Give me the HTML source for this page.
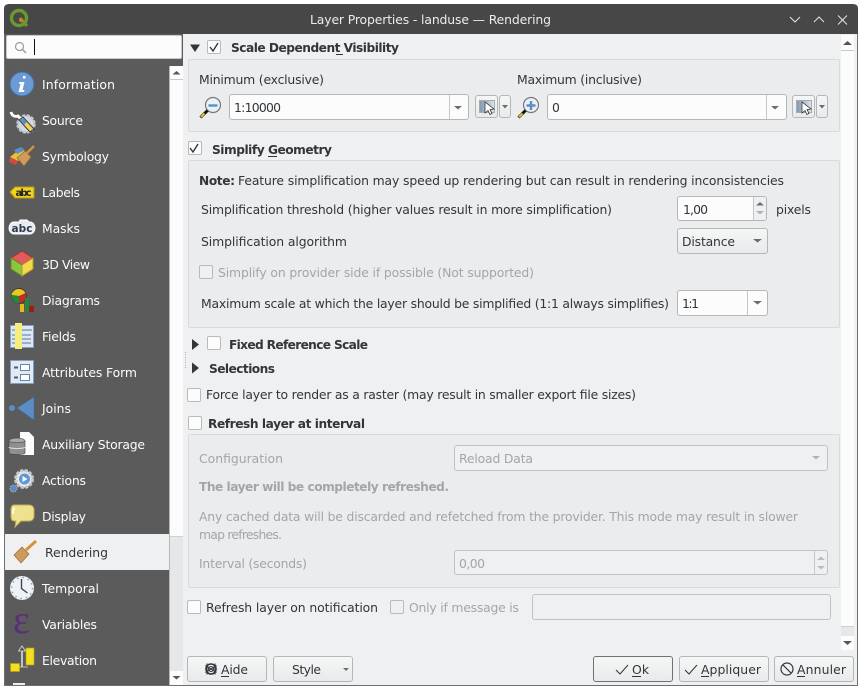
<!DOCTYPE html>
<html><head><meta charset="utf-8"><title>Layer Properties</title>
<style>
html,body{margin:0;padding:0;width:862px;height:698px;overflow:hidden;background:#fff}
#w{position:absolute;left:0;top:0;width:862px;height:698px;overflow:hidden}
.b{position:absolute;box-sizing:border-box}
.grp{background:#ebecee;border:1px solid #d9dadc;border-radius:2px}
.inp{background:#fcfcfc;border:1px solid #b4b6b8;border-radius:3px}
.btn{background:linear-gradient(#f5f6f6,#e9eaeb);border:1px solid #b4b6b8;border-radius:3px}
.chk{background:#fcfcfc;border:1px solid #b8babc;border-radius:2px;width:14px;height:14px}
.dis{background:#eff0f1;border:1px solid #c0c2c4;border-radius:3px}
svg{position:absolute;left:0;top:0}
text{font-family:"DejaVu Sans","Liberation Sans",sans-serif;font-size:12.4px;fill:#31363b}
.s text,text.s{fill:#fcfcfc}
.bd{font-weight:bold;font-size:12.2px}
.d{fill:#a3a5a7}
</style></head><body><div id="w">
<!-- window -->
<div class="b" style="left:4px;top:4px;width:854px;height:682px;background:#eff0f1;border:1px solid #6e6f70;border-top:0;border-radius:4px 4px 0 0"></div>
<div class="b" style="left:4px;top:4px;width:854px;height:30px;background:#474747;border-radius:5px 5px 0 0"></div>
<!-- sidebar -->
<div class="b" style="left:5px;top:34px;width:178px;height:32px;background:#5b5b5b"></div>
<div class="b" style="left:5px;top:66px;width:164px;height:619px;background:#5b5b5b"></div>
<div class="b" style="left:169px;top:66px;width:1px;height:619px;background:#b5b6b7"></div>
<div class="b" style="left:6px;top:35px;width:176px;height:24px;background:#fcfcfc;border:1px solid #c8c9ca;border-radius:2px"></div>
<div class="b" style="left:34px;top:39px;width:1px;height:16px;background:#111"></div>
<div class="b" style="left:170px;top:66px;width:13px;height:470px;background:#fcfcfc"></div>
<div class="b" style="left:170px;top:79px;width:13px;height:1px;background:#c8c9ca"></div>
<div class="b" style="left:170px;top:536px;width:13px;height:135px;background:#e6e7e8;border-top:1px solid #cfd0d1"></div>
<div class="b" style="left:170px;top:671px;width:13px;height:14px;background:#fcfcfc"></div>
<div class="b" style="left:5px;top:534px;width:164px;height:36px;background:#eff0f1"></div>
<!-- main scrollbar -->
<div class="b" style="left:841px;top:35px;width:13px;height:591px;background:#fcfcfc"></div>
<div class="b" style="left:841px;top:50px;width:13px;height:1px;background:#c8c9ca"></div>
<div class="b" style="left:841px;top:626px;width:13px;height:10px;background:#e6e7e8;border-top:1px solid #cfd0d1"></div>
<div class="b" style="left:841px;top:636px;width:13px;height:14px;background:#fcfcfc"></div>
<!-- groups -->
<div class="b grp" style="left:188px;top:59px;width:652px;height:73px"></div>
<div class="b grp" style="left:188px;top:160px;width:652px;height:168px"></div>
<div class="b grp" style="left:188px;top:434px;width:652px;height:154px"></div>
<!-- scale row -->
<div class="b inp" style="left:229px;top:94px;width:240px;height:26px"></div>
<div class="b" style="left:449px;top:95px;width:1px;height:24px;background:#c4c6c8"></div>
<div class="b btn" style="left:475px;top:95px;width:23px;height:23px"></div>
<div class="b btn" style="left:499px;top:95px;width:12px;height:23px"></div>
<div class="b inp" style="left:547px;top:94px;width:240px;height:26px"></div>
<div class="b" style="left:766px;top:95px;width:1px;height:24px;background:#c4c6c8"></div>
<div class="b btn" style="left:792px;top:95px;width:23px;height:23px"></div>
<div class="b btn" style="left:816px;top:95px;width:12px;height:23px"></div>
<!-- simplify controls -->
<div class="b inp" style="left:677px;top:196px;width:90px;height:25px"></div>
<div class="b" style="left:753px;top:197px;width:13px;height:23px;background:#eff0f1;border-left:1px solid #c4c6c8;box-sizing:border-box;border-radius:0 2px 2px 0"></div>
<div class="b btn" style="left:677px;top:228px;width:91px;height:26px"></div>
<div class="b inp" style="left:677px;top:290px;width:91px;height:26px"></div>
<div class="b" style="left:747px;top:291px;width:1px;height:24px;background:#c4c6c8"></div>
<!-- refresh controls -->
<div class="b dis" style="left:454px;top:445px;width:374px;height:26px"></div>
<div class="b dis" style="left:454px;top:550px;width:374px;height:25px"></div>
<div class="b" style="left:814px;top:551px;width:1px;height:23px;background:#c4c6c8"></div>
<div class="b dis" style="left:532px;top:594px;width:299px;height:26px"></div>
<!-- checkboxes -->
<div class="b chk" style="left:207px;top:40px"></div>
<div class="b chk" style="left:188px;top:141px"></div>
<div class="b chk" style="left:207px;top:336px"></div>
<div class="b chk" style="left:187px;top:388px"></div>
<div class="b chk" style="left:188px;top:416px"></div>
<div class="b chk" style="left:187px;top:600px"></div>
<div class="b chk" style="left:390px;top:600px;background:#eff0f1"></div>
<div class="b chk" style="left:199px;top:265px;background:#eff0f1"></div>
<!-- buttons -->
<div class="b btn" style="left:187px;top:656px;width:80px;height:26px"></div>
<div class="b btn" style="left:273px;top:656px;width:80px;height:26px"></div>
<div class="b btn" style="left:593px;top:656px;width:80px;height:26px;border-color:#6f7173"></div>
<div class="b btn" style="left:679px;top:656px;width:90px;height:26px"></div>
<div class="b btn" style="left:774px;top:656px;width:80px;height:26px"></div>

<svg width="862" height="698" viewBox="0 0 862 698" xmlns="http://www.w3.org/2000/svg">
<defs><linearGradient id="cv" x1="0" x2="1" y1="0" y2="0"><stop offset="0" stop-color="#8298ae"/><stop offset="1" stop-color="#dfe3e8"/></linearGradient></defs>
<!-- qgis logo -->
<circle cx="19" cy="18" r="7.500" fill="none" stroke="#6b9a2c" stroke-width="3.400"/>
<path d="M20 18l7 8" stroke="#6b9a2c" stroke-width="3.200"/><circle cx="21" cy="20" r="2" fill="#e0752a"/>
<text class="s" x="310" y="24" textLength="241" lengthAdjust="spacing" style="fill:#ececec">Layer Properties - landuse — Rendering</text>
<path d="M790 17l5 5 5-5M814 22l5-5 5 5M838 15.500l9 9M847 15.500l-9 9" fill="none" stroke="#e6e6e6" stroke-width="1"/>
<!-- search -->
<circle cx="19.500" cy="46.500" r="4" fill="none" stroke="#9a9a9a" stroke-width="1.200"/><path d="M22.500 49.500l3.500 3.500" stroke="#9a9a9a" stroke-width="1.500"/>
<!-- scroll arrows -->
<path d="M172.500 74.500l4-3.500 4 3.500z M172.500 676l4 3.500 4-3.500z M843 45l4.500-4 4.500 4z M843 641l4.500 4 4.500-4z" fill="#555"/>

<!-- sidebar labels -->
<g class="s">
<text x="42" y="89" textLength="73">Information</text>
<text x="42" y="125" textLength="41">Source</text>
<text x="42" y="161" textLength="67">Symbology</text>
<text x="42" y="197" textLength="38">Labels</text>
<text x="42" y="233" textLength="38">Masks</text>
<text x="42" y="269" textLength="48">3D View</text>
<text x="42" y="305" textLength="58">Diagrams</text>
<text x="42" y="341" textLength="34">Fields</text>
<text x="42" y="377" textLength="95">Attributes Form</text>
<text x="42" y="413" textLength="29">Joins</text>
<text x="42" y="449" textLength="103">Auxiliary Storage</text>
<text x="42" y="485" textLength="44">Actions</text>
<text x="42" y="521" textLength="44">Display</text>
<text x="42" y="593" textLength="57">Temporal</text>
<text x="42" y="629" textLength="55">Variables</text>
<text x="42" y="665" textLength="55">Elevation</text>
</g>
<text x="45" y="557" textLength="63">Rendering</text>

<!-- Information -->
<circle cx="22" cy="84" r="12" fill="#6b9bd2" stroke="#3f6ea6"/><path d="M23 78.500h2.500v-2.500h-2.500zM19.500 82h5l-2 8h2l-.5 2h-5.500l2-8h-1.500z" fill="#fff"/>
<!-- Source -->
<circle cx="26" cy="124" r="8.500" fill="#d5d8dc" stroke="#c2c6ca" stroke-width="2.500" stroke-dasharray="3 1.500"/>
<path d="M11 112c1 4 4 5 7 4l6 6" fill="none" stroke="#fff" stroke-width="2.800"/>
<path d="M19 120l4-3 11 12-4 3z" fill="#f3d24f" stroke="#2a3a55"/><path d="M20 120l3-2 4 4-3 3z" fill="#5d8ec4"/>
<!-- Symbology -->
<path d="M10 157l10-8 7 3-9 9z" fill="#e9c23a"/><path d="M10 157l8 4-2 4-7-3z" fill="#d34a3e"/><path d="M14 150l7-3 4 3-8 4z" fill="#5d8ec4"/>
<path d="M17 158l8-7 6 6-7 9z" fill="#cf9a5c" stroke="#9b6b37" stroke-width=".7"/><path d="M27 153l7-7" stroke="#d8913a" stroke-width="2.500"/>
<!-- Labels -->
<path d="M10 192l5-5h19v11h-19z" fill="#f2d21e" stroke="#b89b10"/><text x="15.500" y="196" style="font-size:10px;font-weight:bold;fill:#222" textLength="16">abc</text>
<!-- Masks -->
<path d="M14 222h5l1-2h7l2 2h1c3 0 5 3 5 6s-2 6-5 6h-16c-3 0-5-3-5-6s2-6 5-6z" fill="#e8ecf2" stroke="#fff"/><text x="11.500" y="232" style="font-size:10.500px;font-weight:bold;fill:#2f3a4c" textLength="21">abc</text>
<!-- 3D -->
<path d="M22 251l11 7-11 7-11-7z" fill="#e15b5b" stroke="#a33"/><path d="M11 258l11 7v11l-11-7z" fill="#8cc63f" stroke="#5d8a25"/><path d="M33 258l-11 7v11l11-7z" fill="#f2d94e" stroke="#b39c26"/>
<!-- Diagrams -->
<circle cx="19" cy="296" r="7.500" fill="#c62a2a" stroke="#333" stroke-width=".7"/><path d="M19 296l-7.500-1a7.500 7.500 0 0 1 14-2z" fill="#e9c91e"/><path d="M19 296v7.500a7.500 7.500 0 0 1-7.500-8.500z" fill="#1f8a3a"/>
<rect x="20" y="304" width="4" height="8" fill="#e9b81e"/><rect x="25" y="298" width="4" height="14" fill="#1f8a3a"/><rect x="29" y="306" width="5" height="6" fill="#9c1c1c"/>
<!-- Fields -->
<rect x="10.500" y="325.500" width="23" height="22" fill="#dfe7f1" stroke="#7ea0c8"/><path d="M12 330h20M20 335h11M20 339h11M20 343h11M12 335h4M12 339h4M12 343h4" stroke="#6a8fbd" stroke-width="1.200"/>
<rect x="15" y="323" width="7" height="26" fill="#f6ee7a"/>
<!-- Attributes -->
<rect x="10.500" y="360.500" width="23" height="23" fill="#e4e9f0" stroke="#7ea0c8"/><rect x="20.500" y="364.500" width="9" height="6" fill="#fff" stroke="#5f86b5"/><rect x="20.500" y="374.500" width="9" height="6" fill="#fff" stroke="#5f86b5"/><path d="M14 367.500h4M14 377.500h4" stroke="#3d5f88" stroke-width="2"/>
<!-- Joins -->
<circle cx="12" cy="408" r="3" fill="#5b8dc4"/><path d="M17 408l17-11v23z" fill="#5b8dc4" stroke="#3f6ea6" stroke-width=".6"/>
<!-- Aux -->
<path d="M20 432h9l5 5v18h-14z" fill="#fcfcfc"/><ellipse cx="17" cy="441" rx="8" ry="3" fill="#a9a9a9" stroke="#444" stroke-width=".6"/><path d="M9 441v12c0 2 16 2 16 0v-12c0 2-16 2-16 0z" fill="#8f8f8f" stroke="#444" stroke-width=".6"/><path d="M9 447c0 2 16 2 16 0" fill="none" stroke="#ddd"/>
<!-- Actions -->
<circle cx="24" cy="479" r="8.500" fill="#e9eaec" stroke="#c4c6c9" stroke-width="3" stroke-dasharray="3 1.500"/><circle cx="24.500" cy="479" r="5.500" fill="#5c97d6"/><path d="M22.500 476l5 3-5 3z" fill="#fff"/><circle cx="13.500" cy="488.500" r="3.500" fill="#5b8dc4" stroke="#aaa" stroke-dasharray="1.500 1"/>
<!-- Display -->
<path d="M14 505h15c3 0 5 2 5 5v6c0 3-2 5-5 5h-8l-6 6 1-6h-2c-2 0-3-2-3-5v-6c0-3 1-5 3-5z" fill="#efe28e" stroke="#c2ae4f"/><path d="M15 508c-2 1-2 3-2 6" stroke="#fff" stroke-width="1.500" fill="none"/>
<!-- Rendering -->
<path d="M14 555l8-8 7 7-8 9z" fill="#cf9a5c" stroke="#9b6b37" stroke-width=".7"/><path d="M26 550l10-9" stroke="#d8913a" stroke-width="3"/>
<!-- Temporal -->
<circle cx="22" cy="588" r="12" fill="#eef1f5"/><circle cx="22" cy="588" r="10.500" fill="none" stroke="#7ea0c8" stroke-width="1.500" stroke-dasharray="1.500 4"/><path d="M21.500 579v9.500l6 4.500" fill="none" stroke="#444" stroke-width="1.400"/>
<!-- Variables -->
<text x="13" y="633" style="font-family:'Liberation Serif',serif;font-size:40px;fill:#5b2f78">&#949;</text>
<!-- Elevation -->
<rect x="26" y="648" width="8" height="17" fill="#f3df1e" stroke="#b59f10" stroke-width=".7"/><rect x="10.500" y="663.500" width="9" height="8" fill="#f3df1e" stroke="#b59f10" stroke-width=".7"/>
<path d="M21.500 667v-16h-3l3.500-5 3.500 5h-3v16zM19 667h9" fill="#555" stroke="#ddd" stroke-width=".8"/>
<rect x="13" y="683" width="12" height="2" fill="#eee"/>

<!-- main -->
<path d="M190 44.500h10l-5 7.500zM192 339v11l7-5.500zM192 362.500v11l7-5.500z" fill="#31363b"/>
<path d="M210 47l3 4 5-8M190 148l3 4 5-8" fill="none" stroke="#31363b" stroke-width="1.400"/>
<text class="bd" x="231" y="52" textLength="168">Scale Dependent Visibility</text><path d="M336 54.500h7" stroke="#31363b"/>
<text x="199" y="84" textLength="125">Minimum (exclusive)</text>
<text x="517" y="84" textLength="125">Maximum (inclusive)</text>
<text x="234" y="112" textLength="47">1:10000</text>
<text x="552" y="112">0</text>
<path d="M454 106l4 3.500 4-3.500zM771 106l4 3.500 4-3.500zM502 105l3 3.500 3-3.500zM819 105l3 3.500 3-3.500z" fill="#6a6d70"/>
<!-- zoom icons -->
<g fill="none">
<circle cx="213" cy="105" r="7.500" fill="#eaf0f7" stroke="#777" stroke-width="1.200"/><path d="M208.500 105.500h9" stroke="#5b8dc4" stroke-width="2.400"/><path d="M207.500 110.500l-7 7" stroke="#111" stroke-width="3"/><path d="M204.500 113.500l-3.500 3.500" stroke="#eec227" stroke-width="2"/>
<circle cx="531" cy="105" r="7.500" fill="#eaf0f7" stroke="#777" stroke-width="1.200"/><path d="M526.500 105.500h9M531 101v9" stroke="#5b8dc4" stroke-width="2.400"/><path d="M525.500 110.500l-7 7" stroke="#111" stroke-width="3"/><path d="M522.500 113.500l-3.500 3.500" stroke="#eec227" stroke-width="2"/>
</g>
<!-- canvas cursor icons -->
<rect x="479.500" y="100.500" width="15" height="12" fill="url(#cv)" stroke="#a8aaac"/><path d="M485 102l9 7-4 .5 2 4-2 1-2-4-3 2.500z" fill="#fff" stroke="#222" stroke-width=".7"/>
<rect x="796.500" y="100.500" width="15" height="12" fill="url(#cv)" stroke="#a8aaac"/><path d="M802 102l9 7-4 .5 2 4-2 1-2-4-3 2.500z" fill="#fff" stroke="#222" stroke-width=".7"/>

<text class="bd" x="212" y="154" textLength="120">Simplify Geometry</text><path d="M268 156.500h9" stroke="#31363b"/>
<text class="bd" x="199" y="185" textLength="36">Note:</text>
<text x="238" y="185" textLength="546">Feature simplification may speed up rendering but can result in rendering inconsistencies</text>
<text x="201" y="214" textLength="411">Simplification threshold (higher values result in more simplification)</text>
<text x="683" y="214" textLength="25">1,00</text>
<text x="776" y="214" textLength="35">pixels</text>
<path d="M756 205.500l4-3.500 4 3.500z" fill="#6a6d70"/><path d="M756 211l4 3.500 4-3.500z" fill="#b0b2b4"/>
<text x="201" y="246" textLength="146">Simplification algorithm</text>
<text x="682" y="246" textLength="53">Distance</text>
<path d="M753 239l4.500 3.500 4.500-3.500zM753 301l4.500 3.500 4.500-3.500z" fill="#6a6d70"/>
<text class="d" x="218" y="277" textLength="316">Simplify on provider side if possible (Not supported)</text>
<text x="201" y="308" textLength="468">Maximum scale at which the layer should be simplified (1:1 always simplifies)</text>
<text x="682" y="308" textLength="17">1:1</text>
<text class="bd" x="229" y="349" textLength="139">Fixed Reference Scale</text>
<text class="bd" x="209" y="373" textLength="66">Selections</text>
<path d="M185.500 352v17" stroke="#a9abad" stroke-dasharray="1 1.500"/>
<text x="206" y="399" textLength="430">Force layer to render as a raster (may result in smaller export file sizes)</text>
<text class="bd" x="208" y="428" textLength="157">Refresh layer at interval</text>
<text class="d" x="199" y="463" textLength="84">Configuration</text>
<text class="d" x="459" y="463" textLength="74">Reload Data</text>
<path d="M812 456l4 3.500 4-3.500z" fill="#b0b2b4"/>
<text class="d bd" x="199" y="491" textLength="250">The layer will be completely refreshed.</text>
<text class="d" x="199" y="521" textLength="599">Any cached data will be discarded and refetched from the provider. This mode may result in slower</text>
<text class="d" x="199" y="539" textLength="83">map refreshes.</text>
<text class="d" x="199" y="568" textLength="108">Interval (seconds)</text>
<text class="d" x="459" y="568" textLength="26">0,00</text>
<path d="M817 560l4-3.500 4 3.500zM817 566l4 3.500 4-3.500z" fill="#b9bbbd"/>
<text x="206" y="612" textLength="172">Refresh layer on notification</text>
<text class="d" x="409" y="612" textLength="110">Only if message is</text>

<!-- buttons text -->
<g fill="none" stroke="#31363b">
<circle cx="211" cy="669" r="5" stroke-width="1.600"/><circle cx="211" cy="669" r="2.500" stroke-width="1"/><path d="M205.500 665.500l11 7M216.500 665.500l-11 7M207 663.500v11M215 663.500v11" stroke-width="1.100"/>
<path d="M616 670l4 4 8-9M685 670l4 4 8-9" stroke-width="1"/>
<circle cx="787" cy="669" r="6" stroke-width="1.200"/><path d="M783 665l8 8" stroke-width="1.200"/>
</g>
<text x="221" y="674" textLength="27">Aide</text><path d="M221 676.500h8" stroke="#31363b"/>
<text x="292" y="674" textLength="29">Style</text>
<path d="M343 668l3 3 3-3z" fill="#6a6d70"/>
<text x="632" y="674" textLength="17">Ok</text><path d="M632 676.500h9" stroke="#31363b"/>
<text x="701" y="674" textLength="60">Appliquer</text><path d="M701 676.500h8" stroke="#31363b"/>
<text x="797" y="674" textLength="49">Annuler</text><path d="M797 676.500h8" stroke="#31363b"/>
</svg>
</div></body></html>
